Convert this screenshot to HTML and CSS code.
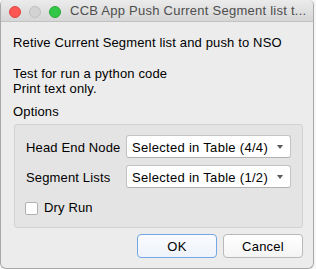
FILE: index.html
```html
<!DOCTYPE html>
<html lang="en">
<head>
  <meta charset="UTF-8" />
  <title>CCB App Push Current Segment list</title>
  <link rel="stylesheet" href="styles.css">
</head>
<body>
  <div class="window">
    <!-- Title bar with traffic lights -->
    <div class="titlebar">
      <div class="lights">
        <span class="light light-close"></span>
        <span class="light light-min"></span>
        <span class="light light-zoom"></span>
      </div>
      <div class="title">CCB App Push Current Segment list t...</div>
    </div>

    <div class="content">
      <p class="summary">Retive Current Segment list and push to NSO</p>
      <p class="notes">Test for run a python code<br>Print text only.</p>

      <div class="group-title">Options</div>
      <div class="group">
        <div class="form-grid">
          <label class="field-label">Head End Node</label>
          <div class="combo">
            <span>Selected in Table (4/4)</span>
            <span class="arrow"></span>
          </div>
          <label class="field-label">Segment Lists</label>
          <div class="combo">
            <span>Selected in Table (1/2)</span>
            <span class="arrow"></span>
          </div>
        </div>
        <div class="check-row">
          <span class="checkbox"></span>
          <span>Dry Run</span>
        </div>
      </div>

      <div class="buttons">
        <button class="btn btn-default">OK</button>
        <button class="btn">Cancel</button>
      </div>
    </div>
  </div>
</body>
</html>
```

FILE: styles.css
```css
html, body {
  margin: 0;
  height: 100%;
}

body {
  background-color: #f6f6f6;
  font-family: "Liberation Sans", Arial, sans-serif;
  font-size: 13px;
  line-height: 16px;
  letter-spacing: 0.15px;
  color: #000;
}

.window {
  box-sizing: border-box;
  width: 314px;
  height: 269px;
  background-color: #ececec;
  border: 1px solid #a9a9a9;
  border-top: none;
  border-radius: 5px 5px 6px 6px;
  overflow: hidden;
}

/* Title bar */
.titlebar {
  height: 21px;
  display: flex;
  align-items: center;
  padding-left: 8px;
  background: linear-gradient(#ebebeb, #d6d6d6);
  border-bottom: 1px solid #c2c2c2;
}

.lights {
  display: flex;
  gap: 8px;
  margin-top: 2px;
}

.light {
  width: 12px;
  height: 12px;
  border-radius: 50%;
  box-sizing: border-box;
}

.light-close {
  background-color: #fc5753;
  border: 1px solid #e0443e;
}

.light-min {
  background-color: #d3d3d3;
  border: 1px solid #c0c0c0;
}

.light-zoom {
  background-color: #33c748;
  border: 1px solid #27aa35;
}

.title {
  margin-left: 9px;
  color: #4d4d4d;
  white-space: nowrap;
  letter-spacing: 0.25px;
}

/* Dialog body */
.content {
  padding: 13px 10px 0 12px;
}

.summary {
  margin: 0;
}

.notes {
  margin: 15px 0 0;
  line-height: 15px;
}

.group-title {
  margin-top: 8px;
}

.group {
  margin: 4px 0 0 1px;
  background-color: #e4e4e4;
  border: 1px solid #d3d3d3;
  border-radius: 3px;
  padding: 10px 11px 11px;
}

.form-grid {
  display: grid;
  grid-template-columns: 100px 1fr;
  row-gap: 7px;
  align-items: center;
}

.field-label {
  padding-top: 2px;
}

.combo {
  height: 23px;
  box-sizing: border-box;
  display: flex;
  align-items: center;
  justify-content: space-between;
  padding: 2px 7px 0 5px;
  background-color: #fff;
  border: 1px solid #c3c3c3;
  border-bottom-color: #b3b3b3;
  border-radius: 3px;
  letter-spacing: 0.3px;
}

.arrow {
  width: 0;
  height: 0;
  border-left: 3.5px solid transparent;
  border-right: 3.5px solid transparent;
  border-top: 4px solid #5a5a5a;
  margin-top: -2px;
}

.check-row {
  display: flex;
  align-items: center;
  gap: 6px;
  margin-top: 12px;
  margin-left: -1px;
}

.checkbox {
  width: 13px;
  height: 13px;
  box-sizing: border-box;
  background-color: #fff;
  border: 1px solid #b1b1b1;
  border-radius: 2px;
}

/* Buttons */
.buttons {
  display: flex;
  justify-content: flex-end;
  gap: 6px;
  margin-top: 6px;
}

.btn {
  width: 80px;
  height: 24px;
  padding: 0;
  font-family: inherit;
  font-size: 13px;
  letter-spacing: 0.25px;
  color: #000;
  background: linear-gradient(#ffffff, #f4f4f4);
  border: 1px solid #b9b9b9;
  border-radius: 4px;
}

.btn-default {
  border-color: #74a7e6;
  background: linear-gradient(#f9fbfe, #eef3fa);
}
```
